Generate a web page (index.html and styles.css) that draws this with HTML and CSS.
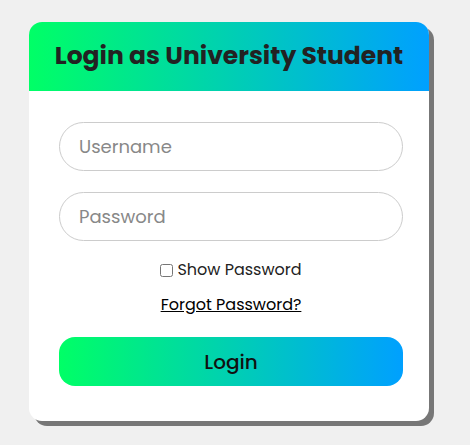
FILE: index.html
```html
<html>
  <head>
    <meta charset="UTF-8">
    <link rel="stylesheet" href="styles.css">
    <title>Student Login</title>
  </head>
  <body>
    <div class="login_box">
      <div class="login_head">Login as University Student</div>
      <form class="login_form">
        <input class="field" type="text" placeholder="Username">
        <input class="field" type="password" placeholder="Password">
        <label class="show_pw"><input type="checkbox"> Show Password</label>
        <a class="forgot" href="#">Forgot Password?</a>
        <button class="btn" type="button">Login</button>
      </form>
    </div>
  </body>
</html>
```

FILE: styles.css
```css
body{
  margin: 0;
  padding: 22px 0 0 29px;
  background: #f0f0f0;
  font-family: Poppins, "Open Sans", "Noto Sans", sans-serif;
}
.login_box{
  width: 400px;
  background: #fff;
  border-radius: 13px;
  box-shadow: 5px 5px 0 #777;
  overflow: hidden;
}
.login_head{
  height: 69px;
  line-height: 68px;
  text-align: center;
  font-size: 25px;
  font-weight: 700;
  color: #222;
  background: linear-gradient(to right, #00ff66, #00a0ff);
}
.login_form{
  margin: 0;
  padding: 31px 26px 35px 30px;
  display: flex;
  flex-direction: column;
  align-items: center;
}
.field{
  box-sizing: border-box;
  width: 100%;
  height: 49px;
  margin-bottom: 21px;
  padding: 0 19px;
  border: 1px solid #ccc;
  border-radius: 25px;
  font-family: inherit;
  font-size: 18px;
  color: #333;
  outline: none;
}
.field::placeholder{
  color: #888;
}
.field:last-of-type{
  margin-bottom: 17px;
}
.show_pw{
  font-size: 16px;
  line-height: 24px;
  color: #222;
  display: flex;
  align-items: center;
}
.show_pw input{
  margin: 0 4px 0 0;
  width: 13px;
  height: 13px;
}
.forgot{
  margin-top: 11px;
  font-size: 16px;
  line-height: 24px;
  color: #000;
}
.btn{
  margin-top: 20px;
  width: 100%;
  height: 49px;
  border: none;
  border-radius: 16px;
  font-family: inherit;
  font-size: 20px;
  font-weight: 500;
  color: #111;
  background: linear-gradient(to right, #00ff66, #00a0ff);
}
```
